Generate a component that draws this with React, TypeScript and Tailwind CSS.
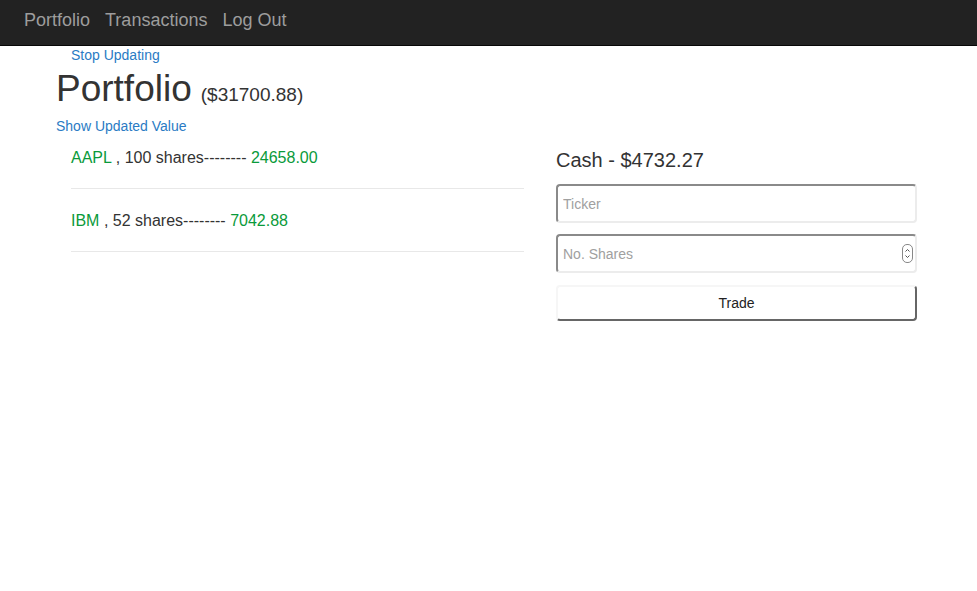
const holdings = [
  { ticker: "AAPL", shares: 100, value: "24658.00" },
  { ticker: "IBM", shares: 52, value: "7042.88" },
];

export default function App() {
  return (
    <div className="min-h-screen bg-white text-[#333] font-['Liberation_Sans',Arial,sans-serif]">
      <nav className="h-[46px] bg-[#222] border-b border-[#080808] flex items-center pl-[24px] gap-[15px] text-[18px] text-[#9d9d9d]">
        <a href="#" className="pb-[4px]">Portfolio</a>
        <a href="#" className="pb-[4px]">Transactions</a>
        <a href="#" className="pb-[4px]">Log Out</a>
      </nav>

      <div className="pl-[56px]">
        <a href="#" className="block ml-[15px] text-[14px] leading-[18px] text-[#2a7bc4]">
          Stop Updating
        </a>
        <h1 className="mt-[5px] flex items-baseline gap-[9px] leading-[40px]">
          <span className="text-[37px]">Portfolio</span>
          <span className="text-[19px]">($31700.88)</span>
        </h1>
        <a href="#" className="block mt-[2px] text-[14px] leading-[18px] text-[#2a7bc4]">
          Show Updated Value
        </a>

        <div className="flex pl-[15px]">
          <ul className="w-[453px]">
            {holdings.map((h, i) => (
              <li
                key={h.ticker}
                className={`border-b border-[#e8e8e8] text-[16px] leading-[20px] pb-[20px] ${i === 0 ? "pt-[13px]" : "pt-[22px]"}`}
              >
                <span className="text-[#0a9a3a]">{h.ticker}</span> , {h.shares} shares--------{" "}
                <span className="text-[#0a9a3a]">{h.value}</span>
              </li>
            ))}
          </ul>

          <div className="ml-[32px] w-[361px] pt-[13px]">
            <h3 className="text-[20px] leading-[24px]">Cash - $4732.27</h3>
            <input
              placeholder="Ticker"
              className="mt-[12px] block w-full h-[39px] rounded-[4px] border-2 border-t-[#8a8a8a] border-l-[#8a8a8a] border-b-[#ececec] border-r-[#ececec] px-[5px] text-[14px] placeholder:text-[#a0a0a0] outline-none"
            />
            <div className="mt-[11px] relative">
              <input
                placeholder="No. Shares"
                className="block w-full h-[39px] rounded-[4px] border-2 border-t-[#8a8a8a] border-l-[#8a8a8a] border-b-[#ececec] border-r-[#ececec] px-[5px] text-[14px] placeholder:text-[#a0a0a0] outline-none"
              />
              <div className="absolute right-[4px] top-[10px] w-[11px] h-[19px] rounded-[5px] border border-[#888] flex flex-col items-center justify-center">
                <svg width="7" height="15" viewBox="0 0 7 15" fill="none" stroke="#555" strokeWidth="1">
                  <path d="M1.5 5.5 L3.5 3.5 L5.5 5.5" />
                  <path d="M1.5 9.5 L3.5 11.5 L5.5 9.5" />
                </svg>
              </div>
            </div>
            <button className="mt-[12px] block w-full h-[36px] rounded-[4px] border-2 border-t-[#f6f6f6] border-l-[#f6f6f6] border-b-[#666] border-r-[#666] bg-white text-[14px] text-[#222]">
              Trade
            </button>
          </div>
        </div>
      </div>
    </div>
  );
}
